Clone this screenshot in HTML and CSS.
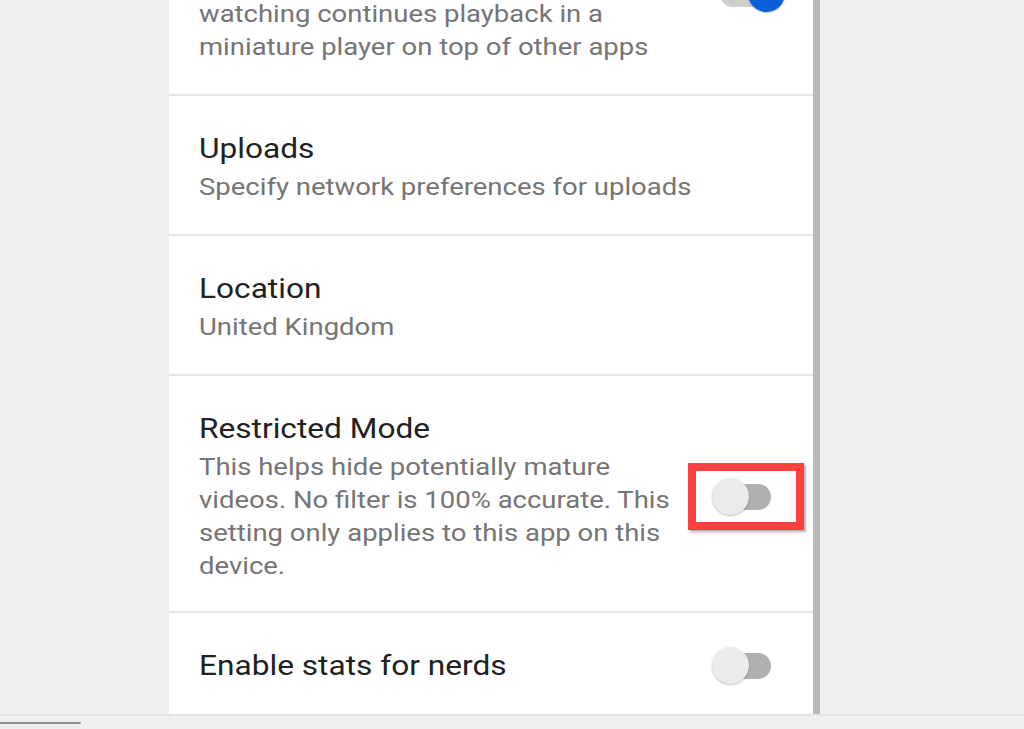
FILE: index.html
```html
<!DOCTYPE html>
<html lang="en">
<head>
<meta charset="utf-8">
<title>Settings</title>
<link rel="stylesheet" href="styles.css">
</head>
<body>
<div class="viewport">
  <div class="panel">
    <div class="list">
      <div class="row row-top">
        <div class="text">
          <div class="sub">watching continues playback in a<br>miniature player on top of other apps</div>
        </div>
        <div class="switch on switch-top"><span class="track"></span><span class="thumb"></span></div>
      </div>
      <div class="row">
        <div class="text">
          <div class="title">Uploads</div>
          <div class="sub">Specify network preferences for uploads</div>
        </div>
      </div>
      <div class="row">
        <div class="text">
          <div class="title">Location</div>
          <div class="sub">United Kingdom</div>
        </div>
      </div>
      <div class="row row-tall">
        <div class="text">
          <div class="title">Restricted Mode</div>
          <div class="sub">This helps hide potentially mature<br>videos. No filter is 100% accurate. This<br>setting only applies to this app on this<br>device.</div>
        </div>
        <div class="switch"><span class="track"></span><span class="thumb"></span><span class="highlight"></span></div>
      </div>
      <div class="row row-last">
        <div class="text">
          <div class="title">Enable stats for nerds</div>
        </div>
        <div class="switch"><span class="track"></span><span class="thumb"></span></div>
      </div>
    </div>
  </div>
  <div class="scrollbar"></div>
</div>
<div class="bottom">
  <div class="bottom-line"></div>
  <div class="tab"></div>
</div>
</body>
</html>
```
FILE: styles.css
```css
html, body {
  margin: 0;
  padding: 0;
}
body {
  background: #efefef;
  width: 1024px;
  height: 729px;
  overflow: hidden;
  font-family: Roboto, "Liberation Sans", sans-serif;
}
.viewport {
  display: flex;
  height: 714px;
  padding-left: 169px;
  overflow: hidden;
}
.panel {
  width: 644px;
  height: 714px;
  background: #ffffff;
  overflow: hidden;
}
.scrollbar {
  width: 7px;
  height: 714px;
  background: #b9b9b9;
}
.list {
  margin-top: -2px;
}
.row {
  display: flex;
  align-items: center;
  padding: 35px 0 30px 30px;
  border-bottom: 2px solid #e6e6e6;
}
.row-top {
  padding-top: 0;
  align-items: flex-start;
}
.row-tall {
  padding-bottom: 28px;
}
.row-last {
  border-bottom: none;
  padding-top: 34px;
}
.text {
  flex: 1;
}
.title {
  font-size: 28px;
  line-height: 36px;
  color: #212121;
  transform: scaleX(1.13);
  transform-origin: left center;
}
.sub {
  font-size: 24px;
  line-height: 33px;
  color: #757575;
  margin-top: 4px;
  transform: scaleX(1.145);
  transform-origin: left center;
}
.row-top .sub {
  margin-top: 0;
}
.switch {
  position: relative;
  width: 73px;
  height: 38px;
  margin-right: 28px;
  flex: none;
}
.switch-top {
  margin-top: -23px;
}
.track {
  position: absolute;
  left: 8px;
  top: 6px;
  width: 51px;
  height: 26px;
  border-radius: 13px;
  background: #b0b0b0;
}
.thumb {
  position: absolute;
  left: 0;
  top: 0;
  width: 37px;
  height: 37px;
  border-radius: 50%;
  background: #ebebeb;
  box-shadow: 0 1px 2px rgba(0, 0, 0, 0.25);
}
.switch.on .track {
  background: #cfcfcf;
}
.switch.on .thumb {
  left: 36px;
  background: #0b5fd6;
}
.highlight {
  position: absolute;
  left: -24px;
  top: -15px;
  width: 100px;
  height: 51px;
  border: 8px solid #fe4040;
  box-shadow: 2px 2px 2px rgba(0, 0, 0, 0.3);
}
.bottom {
  height: 15px;
  background: #efefef;
}
.bottom-line {
  height: 2px;
  background: #e3e3e3;
  border-bottom: 1px dotted #ffffff;
}
.tab {
  width: 80px;
  margin-top: 5px;
  height: 0;
  border-top: 2px solid #8d8d8d;
  border-right: 1px solid #c8c8c8;
}
```
